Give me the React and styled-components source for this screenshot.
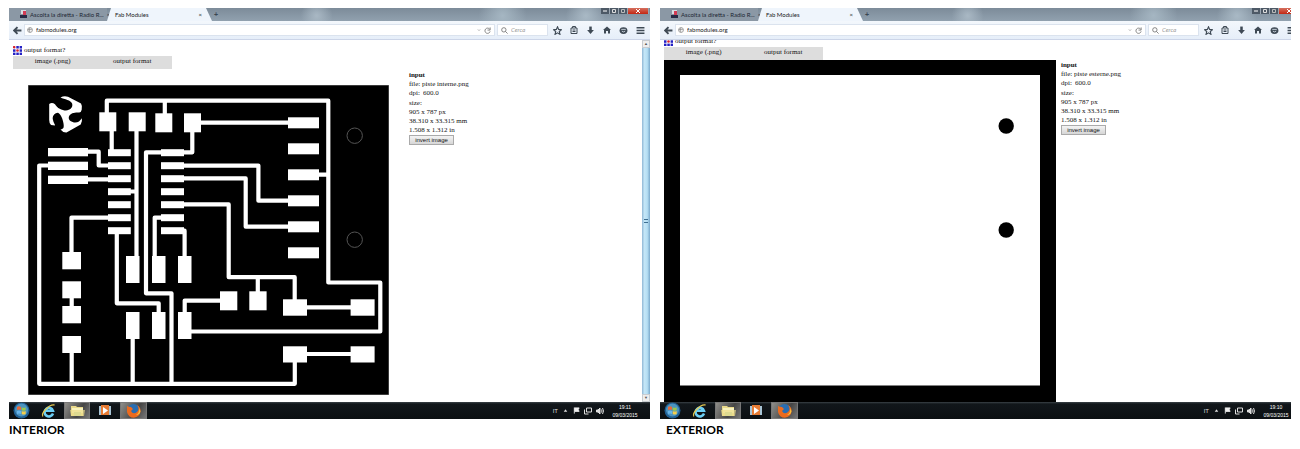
import React from 'react';
import styled, { createGlobalStyle } from 'styled-components';

const Global = createGlobalStyle`
  * { box-sizing: border-box; }
  body { margin: 0; background: #fff; color: #111; font-family: "Liberation Serif", serif; }
  svg { display: block; flex: none; }
  button, input { font-family: inherit; }
`;
const sans = '"Liberation Sans", sans-serif';
const chrome = 'Lato, sans-serif';

const Page = styled.main`
  display: grid;
  grid-template-columns: minmax(0, 641fr) minmax(0, 631fr);
  gap: 10px;
  padding: 8px 9px;
`;
const Shot = styled.figure`
  margin: 0;
  display: flex;
  flex-direction: column;
`;
const Caption = styled.figcaption`
  font: 700 12px/20px Lato, sans-serif;
  color: #000;
  margin-top: 1px;
  padding-left: ${p => (p.$inset ? 6 : 0)}px;
`;
const Clip = styled.div`
  flex: 1;
  display: flex;
  overflow: hidden;
`;
const Desktop = styled.div`
  flex: 1;
  min-width: 0;
  display: flex;
  flex-direction: column;
  margin-right: ${p => (p.$cut ? -10 : 0)}px;
`;
const TitleBar = styled.header`
  height: 13px;
  display: flex;
  align-items: stretch;
  background:
    radial-gradient(circle at 48% 60%, #a9b8c4 0, transparent 16px),
    radial-gradient(circle at 77% 60%, #a5b6c2 0, transparent 24px),
    radial-gradient(circle at 90% 60%, #a9b9c5 0, transparent 20px),
    linear-gradient(#7c8b99, #91a1af);
`;
const Tab = styled.button`
  display: flex;
  align-items: center;
  justify-content: space-between;
  gap: 3px;
  width: ${p => (p.$active ? 105 : 98)}px;
  padding: 0 ${p => (p.$active ? 10 : 3)}px 0 ${p => (p.$active ? 8 : 11)}px;
  border: 0;
  font: 6px/12px ${chrome};
  color: ${p => (p.$active ? '#222' : '#1c2733')};
  background: ${p => (p.$active ? '#eff5fc' : '#8b98a5')};
  clip-path: ${p => (p.$active ? 'polygon(4px 0, calc(100% - 6px) 0, 100% 100%, 0 100%)' : 'none')};
  white-space: nowrap;
`;
const TabLabel = styled.span`
  flex: 1;
  text-align: left;
`;
const NewTab = styled.button`
  border: 0;
  padding: 0 2px;
  background: none;
  color: #3a4652;
  font: 700 7px/12px ${sans};
`;
const Controls = styled.div`
  display: flex;
  margin-left: auto;
  align-self: flex-start;
  padding-right: 1px;
`;
const Control = styled.button`
  width: ${p => (p.$close ? 21 : 9)}px;
  height: 6px;
  display: flex;
  justify-content: center;
  align-items: center;
  padding: 0;
  border: 0;
  border-right: 1px solid #9aa6b2;
  background: ${p => (p.$close ? 'linear-gradient(#d5705f, #c32612)' : '#4d5966')};
`;
const Toolbar = styled.div`
  height: 19px;
  display: flex;
  align-items: center;
  padding: 0 5px 0 4px;
  background: linear-gradient(#f3f7fc, #e6eef9);
  border-bottom: 1px solid #ccd5e8;
`;
const Plain = styled.button`
  display: flex;
  border: 0;
  padding: 0;
  background: none;
`;
const Address = styled.label`
  flex: 1;
  height: 12px;
  display: flex;
  align-items: center;
  gap: 3px;
  margin-left: 2px;
  padding: 0 3px 0 2px;
  background: #fff;
  border: 1px solid #dbe3ee;
`;
const Search = styled(Address)`
  flex: none;
  width: 51px;
  padding: 0 2px 0 3px;
`;
const Field = styled.input`
  flex: 1;
  min-width: 0;
  padding: 0;
  border: 0;
  outline: 0;
  background: none;
  font: 6px/10px ${chrome};
  color: #222;
  &::placeholder { color: #9a9a9a; opacity: 1; font-style: italic; }
`;
const Tools = styled.div`
  display: flex;
  gap: 8px;
  margin-left: 5px;
`;
const Viewport = styled.div`
  flex: 1;
  display: flex;
  overflow: hidden;
`;
const Content = styled.div`
  flex: 1;
  min-width: 0;
  padding: 4px;
  margin-top: ${p => (p.$scrolled ? -9 : 0)}px;
`;
const Heading = styled.div`
  display: flex;
  align-items: center;
  gap: 2px;
  height: 12px;
  font-size: 7px;
`;
const Menu = styled.nav`
  display: grid;
  grid-template-columns: 1fr 1fr;
  width: 159px;
  height: 13px;
  background: #ddd;
`;
const MenuItem = styled.a`
  font-size: 7px;
  line-height: 11px;
  text-align: center;
  color: #111;
  text-decoration: none;
`;
const Work = styled.div`
  display: flex;
  align-items: flex-start;
`;
const Board = styled.div`
  flex: none;
  margin: 16px 20px 3px 15px;
`;
const Outline = styled.div`
  flex: none;
  margin: 0 5px -4px 0;
`;
const Info = styled.section`
  padding-top: ${p => (p.$scrolled ? 1 : 2)}px;
  font-size: 7px;
  line-height: 9px;
  white-space: nowrap;
`;
const Title = styled.h2`
  margin: 0;
  font-size: 7px;
  line-height: 9px;
`;
const Line = styled.div`
  height: ${p => (p.$tall ? 10 : 9)}px;
  display: flex;
  align-items: flex-end;
  gap: 3px;
`;
const Dpi = styled.input`
  width: 20px;
  height: 9px;
  padding: 0;
  border: 0;
  font: 7px/9px "Liberation Serif", serif;
  color: #222;
`;
const Invert = styled.button`
  display: block;
  width: 45px;
  height: 10px;
  padding: 0;
  border: 1px solid #aaa;
  background: linear-gradient(#f4f4f4, #d6d6d6);
  font: 6px/8px ${sans};
  color: #111;
`;
const Scrollbar = styled.div`
  width: 8px;
  display: flex;
  flex-direction: column;
  justify-content: space-between;
  align-items: center;
  background: linear-gradient(90deg, #8fb6d4, #c4e6f7 30%, #b6dff4 65%, #7ba9cb);
`;
const ScrollArrow = styled.button`
  width: 8px;
  height: 8px;
  padding: 0;
  border: 1px solid #c8ccd0;
  background: #eee;
  font: 4px/6px ${sans};
  color: #555;
`;
const Grip = styled.span`
  width: 4px;
  height: 4px;
  border-top: 1px solid #3f6f92;
  border-bottom: 1px solid #3f6f92;
`;
const Taskbar = styled.footer`
  height: 17px;
  display: flex;
  align-items: center;
  background: linear-gradient(#3b4248 0, #12171b 2px, #0b0f12 100%);
  color: #ddd;
`;
const Task = styled.button`
  width: ${p => p.$w}px;
  height: 17px;
  display: flex;
  justify-content: center;
  align-items: center;
  padding: 0;
  border: ${p => (p.$open ? '1px solid #777' : '0')};
  background: ${p => (p.$open ? 'linear-gradient(120deg, #8f8e8a, #454545 60%, #777)' : 'none')};
`;
const Tray = styled.div`
  margin-left: auto;
  display: flex;
  align-items: center;
  gap: 4px;
  padding-right: 10px;
  font: 6px/8px ${sans};
`;
const Clock = styled.time`
  width: 30px;
  margin-left: 2px;
  text-align: center;
  white-space: nowrap;
  font: 5px/8px ${sans};
  color: #fff;
`;

const pads = [
  [99.3, 112.3, 17, 19], [128.7, 112.3, 17, 19], [155.3, 113.3, 17, 19], [184, 113.3, 17, 19],
  [48, 148, 40, 8.3], [48, 161.7, 40, 8.3], [48, 175.7, 40, 8.3],
  [62.3, 252, 18.7, 17.3], [62.3, 281.3, 18.7, 17], [62.3, 306, 18.7, 17.3], [62.3, 336, 18.7, 17],
  [126, 256, 13.5, 27], [152, 256, 13.5, 27], [178, 256, 13.5, 27],
  [126, 312, 13.5, 27], [152, 312, 13.5, 27], [178, 312, 13.5, 27],
  [220, 291.3, 17.3, 19], [249.3, 291.3, 17.3, 19],
  [283, 299.3, 24, 16.4], [350.6, 299.3, 24, 16.4], [283, 346.3, 24, 16.2], [350.6, 346.3, 24, 16.2],
  ...Array.from({ length: 7 }, (_, i) => [108, 149.2 + i * 13, 22.8, 7]),
  ...Array.from({ length: 7 }, (_, i) => [161, 149.2 + i * 13, 23, 7]),
  ...Array.from({ length: 6 }, (_, i) => [288, 117.3 + i * 26, 31, 11]),
];
const traces = `M106.8 114V100.7H328.3V282.5H380.3V331.5H190 M164.8 101V115 M111.7 130V151
M136.5 130V258 M192.3 131V152.3H146V293.3H171.5V384 M200 122.7H289
M87 151.7H98.7V165.5H109 M49 165.5H39.2V383.8H294.8V361 M87 179.4H109 M130 191.5H137
M109 217.6H71.5V253 M116.8 233V303.3H158.7V313 M162 217.6H154.7V257 M183 230.7H184.6V257
M183 165.6H258.4V200.7H289 M183 178.4H245.7V226.7H289 M183 204.4H228.7V277.2H294.7V300
M257.8 277V292 M318 174.7H328 M306 307.3H352 M306 354H352 M221 300.6H184.7V313
M71.7 297V307 M71.7 352V384 M132.7 338V384`;

const Circuit = () => (
  <svg width="361" height="310" viewBox="28 85 361 310" role="img" aria-label="Interior circuit traces">
    <rect x="28" y="85" width="361" height="310" fill="#000" stroke="#777" />
    <path d={traces} fill="none" stroke="#fff" strokeWidth="4.2" strokeLinejoin="round" />
    {pads.map(([x, y, w, h], i) => <rect key={i} x={x} y={y} width={w} height={h} fill="#fff" />)}
    <g fill="none" stroke="#555">
      <circle cx="354.7" cy="135.7" r="7.7" />
      <circle cx="354.7" cy="239.7" r="7.7" />
    </g>
    <path fill="#fff" d="M60.5 97.500Q64 95.300 68 96.700L81 103.500Q82.600 106 81.700 109.700Q81 113 78.600 112.500C76 112.300 70 112.500 68.800 117C68 121.500 75 124 79 121.500Q80.500 120 81.800 118.300Q82.600 121.500 80.700 124.600L66.500 132.600Q63 132.800 60.500 129.500C64 129 64 127 63.500 123.500C63 119.500 61 114.200 58 112.700C54 113 52 116.500 53 120C53.400 122.500 55 124 55 125.500L51 125Q49.200 123.500 49.200 120V104Q52 102 55 104.200C57 108 62 110.500 66 110.500C70 110 73 107.800 72.200 103.800C71 99.800 64.500 99.500 60.500 97.500Z" />
  </svg>
);
const Cutout = () => (
  <svg width="392" height="342" viewBox="664 60 392 342" role="img" aria-label="Exterior board outline">
    <rect x="664" y="60" width="392" height="342" fill="#000" />
    <rect x="680" y="75" width="360" height="310.5" fill="#fff" />
    <circle cx="1006.2" cy="126" r="7.7" />
    <circle cx="1006.2" cy="230" r="7.7" />
  </svg>
);

const Icon = ({ size = 9, children, ...rest }) => (
  <svg width={size} height={size} viewBox="0 0 16 16" fill="none" stroke="#3f4a55" strokeWidth="2" {...rest}>{children}</svg>
);
const FabDots = () => (
  <svg width="9" height="9" viewBox="0 0 9 9">
    {[0, 1, 2].flatMap(r => [0, 1, 2].map(c => {
      const red = (r === 0 && c === 0) || (r === 1 && c === 1);
      return red
        ? <circle key={`${r}${c}`} cx={c * 3.3 + 1.2} cy={r * 3.3 + 1.2} r="1.3" fill="#d6202c" />
        : <rect key={`${r}${c}`} x={c * 3.3} y={r * 3.3} width="2.5" height="2.5" fill="#2420c4" />;
    }))}
  </svg>
);

const BrowserChrome = () => (
  <>
    <TitleBar>
      <Tab>
        <svg width="7" height="9" viewBox="0 0 7 9"><path d="M1 0h5v4H1z" fill="#d8dce2" /><path d="M3 1h3v4H3z" fill="#d33b55" /><path d="M0 5h7v3H0z" fill="#272b45" /></svg>
        <TabLabel>Ascolta la diretta - Radio R...</TabLabel><span>×</span>
      </Tab>
      <Tab $active><TabLabel>Fab Modules</TabLabel><span>×</span></Tab>
      <NewTab aria-label="New tab">+</NewTab>
      <Controls>
        <Control aria-label="Minimize"><svg width="4" height="2"><path d="M0 1h4" stroke="#fff" /></svg></Control>
        <Control aria-label="Maximize"><svg width="4" height="4"><path d="M.5.5h3v3h-3z" fill="none" stroke="#ddd" /></svg></Control>
        <Control aria-label="Restore"><svg width="4" height="4"><path d="M.5.5h3v3h-3z" fill="none" stroke="#bbb" /></svg></Control>
        <Control $close aria-label="Close"><svg width="4" height="4"><path d="M0 0l4 4M4 0L0 4" stroke="#fff" /></svg></Control>
      </Controls>
    </TitleBar>
    <Toolbar>
      <Plain aria-label="Back"><Icon><path d="M15 8H3M8 2L2 8l6 6" strokeWidth="3.4" /></Icon></Plain>
      <Address>
        <Icon size={6} stroke="#888"><circle cx="8" cy="8" r="6.5" /><path d="M2 7h11M8 2q-5 6 0 12" /></Icon>
        <Field aria-label="Address" defaultValue="fabmodules.org" />
        <Icon size={4} stroke="#888"><path d="M3 5l5 6 5-6" /></Icon>
        <Icon size={7} stroke="#777"><path d="M13 5A6 6 0 1 0 14 10M14 1v6H8" /></Icon>
      </Address>
      <Search>
        <Icon size={7} stroke="#777"><circle cx="6.5" cy="6.5" r="5" /><path d="M10 10l5 5" /></Icon>
        <Field aria-label="Search" placeholder="Cerca" />
      </Search>
      <Tools>
        <Plain aria-label="Bookmark"><Icon><path d="M8 1.5l2 4.6 5 .4-3.8 3.4 1.2 5L8 12.2l-4.4 2.7 1.2-5L1 6.5l5-.4z" /></Icon></Plain>
        <Plain aria-label="Clipboard"><Icon size={8}><path d="M2 4h12v11H2zM5 4V1h6v3M5 8h6M5 11h6" /></Icon></Plain>
        <Plain aria-label="Downloads"><Icon><path d="M8 1v7" strokeWidth="4.5" /><path d="M2 7h12l-6 7z" fill="#3f4a55" stroke="none" /></Icon></Plain>
        <Plain aria-label="Home"><Icon size={8}><path d="M0 8l8-7 8 7h-2v7h-4v-5H6v5H2V8z" fill="#3f4a55" stroke="none" /></Icon></Plain>
        <Plain aria-label="Chat"><Icon><ellipse cx="8" cy="8" rx="7" ry="6" fill="#3f4a55" stroke="none" /><path d="M4 6h8M5 9q3 3 6 0" stroke="#d9e2ec" strokeWidth="1.5" /></Icon></Plain>
        <Plain aria-label="Menu"><Icon><path d="M1 3h14M1 8h14M1 13h14" strokeWidth="2.5" /></Icon></Plain>
      </Tools>
    </Toolbar>
  </>
);

const InputInfo = ({ file, scrolled, id }) => (
  <Info $scrolled={scrolled}>
    <Title>input</Title>
    <Line>file: {file}</Line>
    <Line><label htmlFor={id}>dpi:</label><Dpi id={id} defaultValue="600.0" /></Line>
    <Line $tall>size:</Line>
    <Line>905 x 787 px</Line>
    <Line>38.310 x 33.315 mm</Line>
    <Line>1.508 x 1.312 in</Line>
    <Invert>invert image</Invert>
  </Info>
);

const WindowsTaskbar = ({ time }) => (
  <Taskbar>
    <Task $w={24} aria-label="Start">
      <svg width="17" height="17" viewBox="0 0 17 17"><circle cx="8.5" cy="8.5" r="8" fill="#1f5f94" /><circle cx="8.5" cy="8" r="6.5" fill="#4d94bf" /><path d="M4 5q2-1.5 4 0v3q-2-1-4 0z" fill="#e8693a" /><path d="M8.7 5.2q2 1.3 4 0v3q-2 1.2-4 0z" fill="#9bc84c" /><path d="M4 9q2-1 4 0v3q-2-1-4 0z" fill="#68b5ec" /><path d="M8.7 9q2 1 4 0v3q-2 1.2-4 0z" fill="#f6cf4b" /></svg>
    </Task>
    <Task $w={31} aria-label="Internet Explorer">
      <svg width="15" height="15" viewBox="0 0 15 15" fill="none"><path d="M12 10.5A4.3 4.3 0 1 1 12 7.8H4" stroke="#6ccff6" strokeWidth="2.5" /><path d="M2 13.5C-1 11 8 1 13.5 2" stroke="#e5c850" strokeWidth="1.3" /></svg>
    </Task>
    <Task $w={26} $open aria-label="Explorer">
      <svg width="15" height="12" viewBox="0 0 15 12"><path d="M1 1h5l1 1h6v9H1z" fill="#e9d98a" /><path d="M2 3h11v5H2z" fill="#f8f2bd" /><path d="M4 7h7v4H4z" fill="#b8cf9b" /><path d="M0 5h15l-1 6H1z" fill="#ecdd8c" opacity=".7" /></svg>
    </Task>
    <Task $w={30} aria-label="Media Player">
      <svg width="12" height="11" viewBox="0 0 12 11"><path d="M0 1h12v9H0z" fill="#a8c4d5" /><path d="M2 0h8v10H2z" fill="#e77c35" /><path d="M4 2l5 3.5L4 9z" fill="#fff" /></svg>
    </Task>
    <Task $w={27} $open aria-label="Firefox">
      <svg width="15" height="15" viewBox="0 0 15 15"><circle cx="7.5" cy="7.5" r="6.5" fill="#2a6db1" /><path d="M1 3q2 1 4 1l2 2-2 2q2 4 6 1 3-3 0-7 4 2 3.5 6.5A6.8 6.8 0 0 1 1 9z" fill="#ec6b1e" /><path d="M13 5q1 5-3 7 4 0 4.5-4z" fill="#f8c13a" /></svg>
    </Task>
    <Tray>
      <span>IT</span>
      <Icon size={7} stroke="none" fill="#ddd"><path d="M8 5l4 6H4z" /></Icon>
      <Icon size={7} stroke="#eee"><path d="M3 1v14" /><path d="M4 2h10l-2 4 2 4H4z" fill="#eee" /></Icon>
      <Icon size={8} stroke="#ddd"><path d="M5 2h10v8H5zM1 5v9h8" /></Icon>
      <Icon size={8} stroke="#ddd"><path d="M1 6h3l4-4v12l-4-4H1z" fill="#ddd" /><path d="M11 5q2 3 0 6M13 2q4 6 0 12" /></Icon>
      <Clock>{time}<br />09/03/2015</Clock>
    </Tray>
  </Taskbar>
);

const Screen = ({ scrolled, file, time, caption }) => (
  <Shot>
    <Clip>
      <Desktop $cut={scrolled}>
        <BrowserChrome />
        <Viewport>
          <Content $scrolled={scrolled}>
            <Heading><FabDots />output format?</Heading>
            <Menu>
              <MenuItem href="#image">image (.png)</MenuItem>
              <MenuItem href="#format">output format</MenuItem>
            </Menu>
            <Work>
              {scrolled ? <Outline><Cutout /></Outline> : <Board><Circuit /></Board>}
              <InputInfo file={file} scrolled={scrolled} id={scrolled ? 'dpi-exterior' : 'dpi-interior'} />
            </Work>
          </Content>
          {!scrolled && <Scrollbar><ScrollArrow aria-label="Scroll up">▲</ScrollArrow><Grip /><ScrollArrow aria-label="Scroll down">▼</ScrollArrow></Scrollbar>}
        </Viewport>
        <WindowsTaskbar time={time} />
      </Desktop>
    </Clip>
    <Caption $inset={scrolled}>{caption}</Caption>
  </Shot>
);

export default function App() {
  return (
    <>
      <Global />
      <Page>
        <Screen file="piste interne.png" time="19:11" caption="INTERIOR" />
        <Screen scrolled file="piste esterne.png" time="19:10" caption="EXTERIOR" />
      </Page>
    </>
  );
}
